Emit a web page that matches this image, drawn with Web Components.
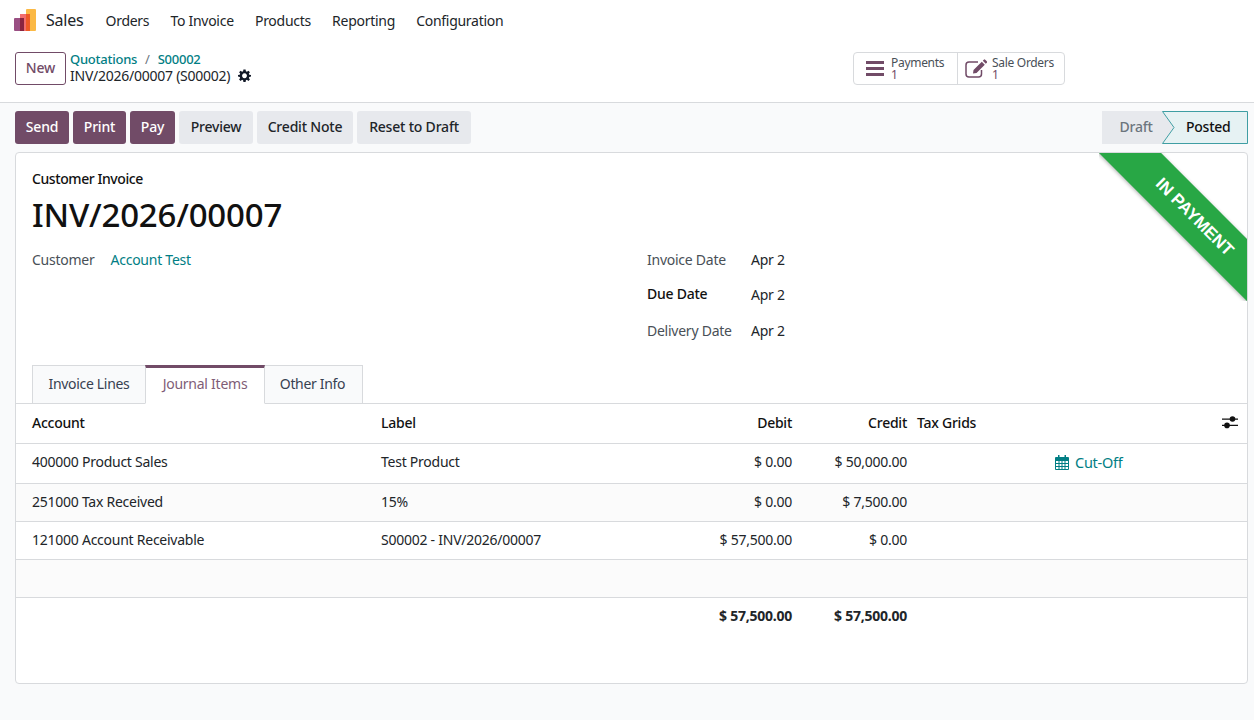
<!DOCTYPE html>
<html><head><meta charset="utf-8">
<style>
html,body{margin:0;padding:0;height:720px;overflow:hidden}
body{background:#f9fafb;font:14px/21px "Noto Sans",sans-serif;color:#212529;letter-spacing:-.25px}
</style></head><body>
<app-navbar></app-navbar>
<control-panel></control-panel>
<action-bar></action-bar>
<invoice-sheet></invoice-sheet>
<script>
function def(name, html){
  customElements.define(name, class extends HTMLElement{
    constructor(){super();this.attachShadow({mode:'open'}).innerHTML=html;}
  });
}
def('app-navbar',`<style>
:host{display:flex;align-items:center;height:41px;background:#fff;padding-left:14px;box-sizing:border-box}
svg{display:block;width:22px;height:23px;margin-right:10px;margin-top:-1px}
b{font-weight:400;font-size:16px;width:59.500px;color:#212529}
span{margin-right:21.2px;color:#212529;letter-spacing:-.28px}
</style>
<svg viewBox="0 0 22 23"><rect x="12" y="0" width="10" height="22" rx="1" fill="#fbb945"/><rect x="6" y="5" width="10" height="17" fill="#f26d6d" /><rect x="12" y="5" width="4" height="17" fill="#ee5a26"/><rect x="0" y="9" width="10" height="13" rx="1" fill="#9a4f83"/><rect x="6" y="9" width="4" height="13" fill="#8a2440"/></svg>
<b>Sales</b><span>Orders</span><span>To Invoice</span><span>Products</span><span>Reporting</span><span>Configuration</span>`);
def('o-button',`<style>
:host{display:inline-flex;align-items:center;justify-content:center;box-sizing:border-box;height:33px;padding:0 0 2px;border-radius:3px;font-weight:500;background:#e7e9ed;color:#212529;white-space:nowrap;letter-spacing:-.2px}
:host([primary]){background:#714b67;color:#fff}
:host([outline]){background:#fff;color:#714b67;border:1px solid #714b67}
</style><slot></slot>`);
def('stat-button',`<style>
:host{display:flex;align-items:center;box-sizing:border-box;height:100%;font-size:12px;line-height:12px;color:#495057;letter-spacing:-.3px}
.i{display:flex;width:24px;justify-content:center;margin-right:4px}
.t{padding-top:1px}
i{display:block;font-style:normal;color:#714b67}
</style><div class="i"><slot name="icon"></slot></div><div class="t"><slot></slot><i>1</i></div>`);
def('control-panel',`<style>
:host{display:flex;height:62px;box-sizing:border-box;background:#fff;border-bottom:1px solid #d8dadd;padding:11px 0 0 15px}
.bc{margin-left:4px;line-height:15px;width:195px}
.top{color:#017e84;font-weight:500;font-size:13px;}
.top s{text-decoration:none;color:#6c757d;margin:0 8px;font-weight:400}
.cur{display:flex;align-items:center;gap:7.500px;margin-top:.5px}
.stats{display:flex;box-sizing:border-box;height:33px;margin-left:588px;border:1px solid #d8dadd;border-radius:4px;width:212px}
stat-button:first-child{width:104px;border-right:1px solid #d8dadd;padding-left:9px}
stat-button:last-child{flex:1;padding-left:6px}
o-button{width:51px;height:33px}
</style>
<o-button outline>New</o-button>
<div class="bc"><div class="top">Quotations<s>/</s>S00002</div>
<div class="cur">INV/2026/00007 (S00002)<svg width="13" height="13" viewBox="0 0 24 24"><path fill="#111827" fill-rule="evenodd" d="M10 1h4l.6 3.2 1.900.8L19.200 3 22 5.800 20 8.500l.8 1.900L24 11v3l-3.200.6-.8 1.900L22 19.200 19.200 22l-2.700-2-1.900.8L14 24h-4l-.6-3.200-1.900-.8L4.800 22 2 19.200l2-2.700-.8-1.900L0 14v-3l3.200-.6.800-1.900-2-2.700L4.800 3l2.700 2 1.900-.8zM12 8a4.500 4.500 0 1 0 .01 0z"/></svg></div></div>
<div class="stats">
<stat-button><svg slot="icon" width="18" height="15" viewBox="0 0 18 15"><path fill="#714b67" d="M0 0h18v3H0zM0 6h18v3H0zM0 12h18v3H0z"/></svg>Payments</stat-button>
<stat-button><svg slot="icon" width="22" height="19" viewBox="0 0 22 19"><path fill="none" stroke="#714b67" stroke-width="1.500" d="M16.500 11v4a3 3 0 0 1-3 3H4a3 3 0 0 1-3-3V6a3 3 0 0 1 3-3h9"/><path fill="#714b67" d="M8.500 11 16.800 2.700l3 3L11.500 14l-3.500.5zM17.800 1.700l1-1a1 1 0 0 1 1.400 0l1.600 1.600a1 1 0 0 1 0 1.400l-1 1z"/></svg>Sale Orders</stat-button>
</div>`);
def('status-bar',`<style>
:host{display:flex;height:33px;margin-left:auto;font-weight:500}
.d{width:60px;background:#e7e9ed;color:#6c757d;display:flex;align-items:center;justify-content:center;padding:0 0 2px 8px;box-sizing:border-box}
.p{position:relative;width:86px;display:flex;align-items:center;padding:0 0 2px 24px;box-sizing:border-box;color:#111}
svg{position:absolute;inset:0;width:86px;height:33px}
span{position:relative}
</style><div class="d">Draft</div><div class="p"><svg viewBox="0 0 86 33"><path d="M0 0L12 16.500 0 33Z" fill="#e7e9ed"/><path d="M.5.500H85.500V32.500H.5L12 16.500Z" fill="#e6f2f3" stroke="#3f9ea3"/></svg><span>Posted</span></div>`);
def('action-bar',`<style>
:host{display:flex;gap:4px;padding:8px 6px 0 15px;height:41px;box-sizing:content-box}
</style>
<o-button primary style="width:54px">Send</o-button><o-button primary style="width:53px">Print</o-button><o-button primary style="width:45px">Pay</o-button><o-button style="width:74px">Preview</o-button><o-button style="width:96px">Credit Note</o-button><o-button style="width:114px">Reset to Draft</o-button>
<status-bar></status-bar>`);
def('in-ribbon',`<style>
:host{position:absolute;top:0;right:0;width:148px;height:148px;overflow:hidden;display:block}
div{position:absolute;left:-36px;top:36px;width:250px;height:44px;transform:rotate(45deg);background:#28a745;color:#fff;font:700 17px/44px "Liberation Sans",sans-serif;letter-spacing:0;text-align:center;text-transform:uppercase;box-shadow:0 1px 4px rgba(0,0,0,.3);padding-left:18px;box-sizing:border-box}
</style><div>In Payment</div>`);
def('field-row',`<style>
:host{display:flex;height:36px;align-items:flex-start}
.l{width:104px;color:#495057}
:host([strong]) .l{color:#111;font-weight:500;margin-top:-1px}
</style><div class="l"><slot name="label"></slot></div><div><slot></slot></div>`);
def('tab-bar',`<style>
:host{display:flex;height:39px;box-sizing:border-box;padding-left:16px;border-bottom:1px solid #d8dadd}
div{box-sizing:border-box;height:39px;background:#f9fafb;border:1px solid #d8dadd;display:flex;align-items:center;justify-content:center;color:#374151;padding-bottom:2px;letter-spacing:-.32px}
.a{background:#fff;color:#7f5d77;border-top:3px solid #714b67;border-bottom-color:#fff;margin:0 -1px;padding-bottom:4px;position:relative;z-index:1;letter-spacing:-.25px}
</style><div style="width:114px">Invoice Lines</div><div class="a" style="width:120px">Journal Items</div><div style="width:99px;padding-right:2px">Other Info</div>`);
def('journal-table',`<style>
:host{display:block}
table{border-collapse:collapse;table-layout:fixed;width:1231px;letter-spacing:inherit}
td,th{padding:0 0 2px;font-weight:400;text-align:left;vertical-align:middle}
th{font-weight:500;color:#111;height:37px;border-bottom:1px solid #d8dadd}
tr.r td{border-bottom:1px solid #d8dadd;height:35px}
tr.h td{height:35px;padding-bottom:4px}
tr.o{background:#fbfbfb}
.a{padding-left:16px}
.n{text-align:right}
.t{padding-left:10px}
tfoot td{font-weight:700;height:35px}
.cut{color:#017e84;display:flex;align-items:center;gap:6px;font-size:14.500px;margin:2px 0 0 10px}
th svg{display:block;margin-left:176.500px}
</style><table>
<colgroup><col style="width:365px"><col style="width:300px"><col style="width:111px"><col style="width:115px"><col style="width:138px"><col></colgroup>
<thead><tr><th class="a">Account</th><th>Label</th><th class="n">Debit</th><th class="n">Credit</th><th class="t">Tax Grids</th><th><svg width="16" height="13" viewBox="0 0 16 13"><path fill="#111" d="M0 2.500h16v1.200H0zM0 8.800h16V10H0z"/><circle cx="10.500" cy="3" r="2.800" fill="#111"/><circle cx="5" cy="9.400" r="2.800" fill="#111"/></svg></th></tr></thead>
<tbody>
<tr class="r h"><td class="a">400000 Product Sales</td><td>Test Product</td><td class="n">$ 0.00</td><td class="n">$ 50,000.00</td><td></td><td><div class="cut"><svg width="14" height="15" viewBox="0 0 14 15"><path fill="#017e84" fill-rule="evenodd" d="M3 0h1.500v2h5V0H11v2h2a1 1 0 0 1 1 1v11a1 1 0 0 1-1 1H1a1 1 0 0 1-1-1V3a1 1 0 0 1 1-1h2zM1 6v2h2.500V6zm3.500 0v2h2V6zm3 0v2h2V6zm3 0v2H13V6zM1 9v2h2.500V9zm3.500 0v2h2V9zm3 0v2h2V9zm3 0v2H13V9zM1 12v2h2.500v-2zm3.500 0v2h2v-2zm3 0v2h2v-2zm3 0v2H13v-2z"/></svg>Cut-Off</div></td></tr>
<tr class="r o"><td class="a">251000 Tax Received</td><td>15%</td><td class="n">$ 0.00</td><td class="n">$ 7,500.00</td><td></td><td></td></tr>
<tr class="r"><td class="a">121000 Account Receivable</td><td>S00002 - INV/2026/00007</td><td class="n">$ 57,500.00</td><td class="n">$ 0.00</td><td></td><td></td></tr>
<tr class="r o"><td colspan="6"></td></tr>
</tbody>
<tfoot><tr><td></td><td></td><td class="n">$ 57,500.00</td><td class="n">$ 57,500.00</td><td></td><td></td></tr></tfoot>
</table>`);
def('invoice-sheet',`<style>
:host{display:block;position:relative;box-sizing:border-box;width:1233px;height:532px;margin:0 0 0 15px;background:#fff;border:1px solid #d8dadd;border-radius:4px}
.head{padding:15px 16px 0}
.k{font-weight:500;color:#111;letter-spacing:-.42px}
h1{margin:3px 0 0;font-size:33px;line-height:45px;font-weight:500;color:#111;letter-spacing:-.2px}
.cols{display:flex;margin-top:12px;height:116px}
.left{width:615px;display:flex}
.left span{width:78.500px;color:#495057}
.left a{color:#017e84;}
</style>
<in-ribbon></in-ribbon>
<div class="head"><div class="k">Customer Invoice</div><h1>INV/2026/00007</h1>
<div class="cols"><div class="left"><span>Customer</span><a>Account Test</a></div>
<div><field-row style="height:35px"><span slot="label">Invoice Date</span>Apr 2</field-row><field-row strong><span slot="label">Due Date</span>Apr 2</field-row><field-row><span slot="label">Delivery Date</span>Apr 2</field-row></div></div></div>
<tab-bar></tab-bar><journal-table></journal-table>`);
</script></body></html>
